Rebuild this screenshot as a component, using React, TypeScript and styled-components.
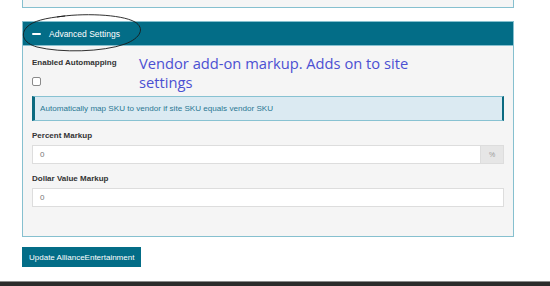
import styled, { createGlobalStyle } from "styled-components";

const GlobalStyle = createGlobalStyle`
  html, body {
    margin: 0;
    padding: 0;
    background: #ffffff;
    overflow: hidden;
  }
  body {
    font-family: "Liberation Sans", Arial, sans-serif;
  }
`;

const Page = styled.div`
  display: flex;
  flex-direction: column;
  width: 550px;
`;

const Content = styled.div`
  display: flex;
  flex-direction: column;
  padding: 0 36px 0 22px;
`;

const PrevPanel = styled.div`
  background: #f5f5f5;
  border: 1px solid #86c0cf;
  border-top: none;
  box-sizing: border-box;
  height: 8px;
`;

const Panel = styled.div`
  border: 1px solid #86c0cf;
  margin-top: 13px;
  position: relative;
`;

const PanelHeader = styled.div`
  align-items: center;
  background: #036d87;
  color: #ffffff;
  display: flex;
  font-size: 8.5px;
  gap: 8px;
  height: 23px;
  padding-left: 9px;
`;

const Minus = styled.span`
  background: #ffffff;
  border-radius: 1px;
  display: block;
  height: 2px;
  width: 9px;
`;

const Scribble = styled.svg`
  left: -2px;
  pointer-events: none;
  position: absolute;
  top: -10px;
`;

const PanelBody = styled.div`
  background: #f5f5f5;
  border-top: 1px solid #86c0cf;
  display: flex;
  flex-direction: column;
  padding: 8px 9px 29px;
`;

const TopRow = styled.div`
  display: flex;
`;

const CheckColumn = styled.div`
  display: flex;
  flex-direction: column;
  gap: 8px;
  padding-top: 3px;
  width: 107px;
`;

const Label = styled.div`
  color: #333333;
  font-size: 8px;
  font-weight: bold;
  line-height: 12px;
`;

const Check = styled.input`
  appearance: none;
  background: #ffffff;
  border: 1px solid #8a8a8a;
  border-radius: 2px;
  box-sizing: border-box;
  height: 9px;
  margin: 0;
  width: 9px;
`;

const Note = styled.div`
  color: #4b50d2;
  font-family: "Open Sans", "Noto Sans", sans-serif;
  font-size: 14.7px;
  line-height: 19px;
  width: 300px;
`;

const Alert = styled.div`
  align-items: center;
  background: #dbeaf2;
  border: 1px solid #88c2d2;
  border-left: 3px solid #0b6a80;
  border-right: 2px solid #0b6a80;
  color: #2b7893;
  display: flex;
  font-size: 8.1px;
  height: 23px;
  margin-top: 4px;
  padding-left: 5px;
`;

const Group = styled.div`
  display: flex;
  flex-direction: column;
  gap: 3px;
  margin-top: 9px;
`;

const InputRow = styled.div`
  display: flex;
`;

const Field = styled.div`
  align-items: center;
  background: #ffffff;
  border: 1px solid #dddddd;
  box-sizing: border-box;
  color: #777777;
  display: flex;
  flex: 1;
  font-size: 8px;
  height: 19px;
  padding-left: 7px;
`;

const Addon = styled.div`
  align-items: center;
  background: #e6e6e6;
  border: 1px solid #dddddd;
  border-left: none;
  box-sizing: border-box;
  color: #999999;
  display: flex;
  font-size: 7px;
  height: 19px;
  justify-content: center;
  width: 23px;
`;

const Button = styled.button`
  align-self: flex-start;
  background: #036d87;
  border: none;
  color: #ffffff;
  font-family: "Liberation Sans", Arial, sans-serif;
  font-size: 8px;
  height: 20px;
  margin-top: 10px;
  padding: 0 7px;
`;

const Footer = styled.div`
  background: #2b2b2b;
  border-top: 1px solid #8a8a8a;
  height: 20px;
  margin-top: 14px;
`;

export default function App() {
  return (
    <Page>
      <GlobalStyle />
      <Content>
        <PrevPanel />
        <Panel>
          <PanelHeader>
            <Minus />
            Advanced Settings
          </PanelHeader>
          <Scribble width="122" height="42" viewBox="0 0 122 42">
            <path
              d="M36 5 C 60 1, 100 2, 114 10 C 124 16, 120 26, 104 32 C 82 40, 40 41, 16 35 C 2 31, -1 22, 6 15 C 12 9, 24 6, 44 4"
              fill="none"
              stroke="#1a1a1a"
              strokeWidth="0.9"
            />
          </Scribble>
          <PanelBody>
            <TopRow>
              <CheckColumn>
                <Label>Enabled Automapping</Label>
                <Check type="checkbox" />
              </CheckColumn>
              <Note>Vendor add-on markup. Adds on to site settings</Note>
            </TopRow>
            <Alert>Automatically map SKU to vendor if site SKU equals vendor SKU</Alert>
            <Group>
              <Label>Percent Markup</Label>
              <InputRow>
                <Field>0</Field>
                <Addon>%</Addon>
              </InputRow>
            </Group>
            <Group>
              <Label>Dollar Value Markup</Label>
              <InputRow>
                <Field>0</Field>
              </InputRow>
            </Group>
          </PanelBody>
        </Panel>
        <Button>Update AllianceEntertainment</Button>
      </Content>
      <Footer />
    </Page>
  );
}
